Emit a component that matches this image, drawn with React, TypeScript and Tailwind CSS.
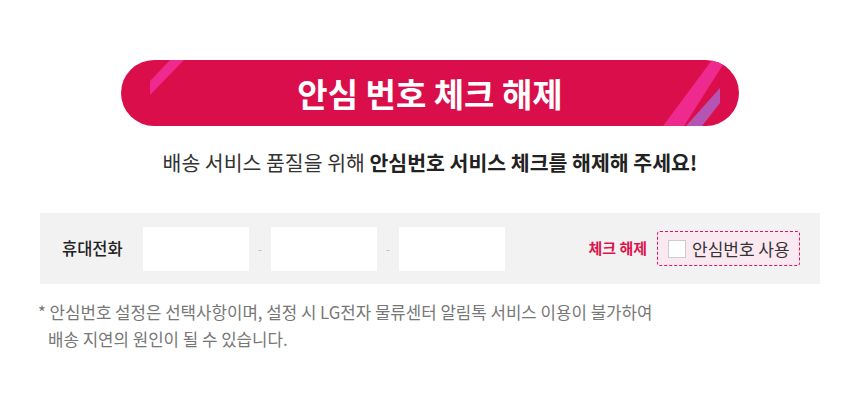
import React from "react";

export default function App() {
  const font = { fontFamily: '"Noto Sans CJK KR", "Noto Sans", sans-serif' };
  return (
    <div className="w-[860px] h-[408px] bg-white pt-[60px]" style={font}>
      <div className="flex justify-center">
        <div className="relative h-[66px] w-[618px] rounded-full bg-[#da0e4b] overflow-hidden flex items-center justify-center">
          <svg className="absolute inset-0" width="618" height="66" viewBox="0 0 618 66">
            <polygon points="49,0 63,0 29,35 29,21" fill="#ee2a8e" />
            <polygon points="591,0 605,0 563,66 542,66" fill="#ee2a8e" />
            <polygon points="599,28 599,43 581,66 565,66" fill="#b455b4" />
          </svg>
          <span className="relative text-white font-bold text-[33px] leading-none">
            안심 번호 체크 해제
          </span>
        </div>
      </div>
      <p className="mt-[22px] text-center text-[20.5px] leading-[28px] text-[#333]">
        배송 서비스 품질을 위해 <b className="font-bold text-[#222]">안심번호 서비스 체크를 해제해 주세요!</b>
      </p>
      <div className="mt-[37px] mx-[40px] h-[71px] bg-[#f2f2f2] flex items-center pl-[22px] pr-[20px]">
        <span className="w-[81px] text-[16.5px] font-medium text-[#222]">휴대전화</span>
        <div className="w-[106px] h-[44px] bg-white" />
        <span className="w-[22px] text-center text-[12px] text-[#bbb]">-</span>
        <div className="w-[106px] h-[44px] bg-white" />
        <span className="w-[22px] text-center text-[12px] text-[#bbb]">-</span>
        <div className="w-[106px] h-[44px] bg-white" />
        <span className="ml-auto text-[15px] font-bold text-[#e0124d]">체크 해제</span>
        <label className="ml-[10px] h-[35px] w-[143px] flex items-center border border-dashed border-[#e0145f] rounded-[3px] bg-[#fbe9f1] pl-[10px]">
          <span className="w-[18px] h-[18px] bg-white border border-[#ccc]" />
          <span className="ml-[6px] text-[17px] text-[#333] leading-none">안심번호 사용</span>
        </label>
      </div>
      <div className="mt-[15px] pl-[38px] text-[16.8px] leading-[27px] text-[#777]">
        <p>* 안심번호 설정은 선택사항이며, 설정 시 LG전자 물류센터 알림톡 서비스 이용이 불가하여</p>
        <p className="pl-[10px]">배송 지연의 원인이 될 수 있습니다.</p>
      </div>
    </div>
  );
}
